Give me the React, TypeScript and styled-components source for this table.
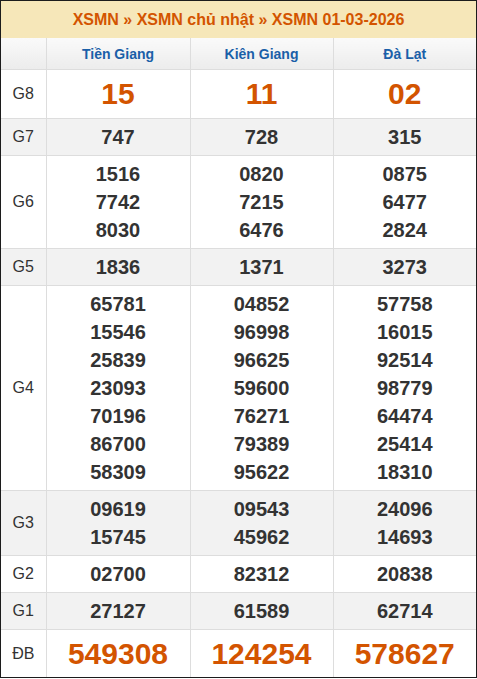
import React from 'react';
import styled, { createGlobalStyle } from 'styled-components';

const GlobalStyle = createGlobalStyle`
  html, body {
    margin: 0;
    padding: 0;
    background: #fff;
  }
  body {
    font-family: 'Liberation Sans', Arial, sans-serif;
  }
`;

type Prize = {
  label: string;
  results: string[][];
  big?: boolean;
  special?: boolean;
};

const provinces = ['Tiền Giang', 'Kiên Giang', 'Đà Lạt'];

const prizes: Prize[] = [
  { label: 'G8', results: [['15'], ['11'], ['02']], big: true },
  { label: 'G7', results: [['747'], ['728'], ['315']] },
  {
    label: 'G6',
    results: [
      ['1516', '7742', '8030'],
      ['0820', '7215', '6476'],
      ['0875', '6477', '2824'],
    ],
  },
  { label: 'G5', results: [['1836'], ['1371'], ['3273']] },
  {
    label: 'G4',
    results: [
      ['65781', '15546', '25839', '23093', '70196', '86700', '58309'],
      ['04852', '96998', '96625', '59600', '76271', '79389', '95622'],
      ['57758', '16015', '92514', '98779', '64474', '25414', '18310'],
    ],
  },
  {
    label: 'G3',
    results: [
      ['09619', '15745'],
      ['09543', '45962'],
      ['24096', '14693'],
    ],
  },
  { label: 'G2', results: [['02700'], ['82312'], ['20838']] },
  { label: 'G1', results: [['27127'], ['61589'], ['62714']] },
  { label: 'ĐB', results: [['549308'], ['124254'], ['578627']], special: true },
];

const Wrapper = styled.div`
  width: 477px;
  box-sizing: border-box;
  border: 1px solid #1c1c1c;
`;

const Title = styled.h1`
  margin: 0;
  height: 37px;
  display: flex;
  align-items: center;
  justify-content: center;
  background: #f6e7b9;
  color: #d35400;
  font-size: 16px;
  font-weight: bold;
`;

const Table = styled.table`
  width: 100%;
  border-collapse: collapse;
  table-layout: fixed;
`;

const HeadCell = styled.th`
  height: 31px;
  padding: 0;
  background: linear-gradient(#fafafa, #ececec);
  color: #1a5fa8;
  font-size: 14px;
  font-weight: bold;
  border-bottom: 1px solid #ddd;
  border-left: 1px solid #ddd;
  &:first-child {
    border-left: none;
  }
`;

const Row = styled.tr<{ $odd: boolean }>`
  background: ${({ $odd }) => ($odd ? '#f2f2f2' : '#fff')};
  &:last-child td {
    border-bottom: none;
  }
`;

const Label = styled.td`
  padding: 0;
  text-align: center;
  color: #333;
  font-size: 16px;
  border-bottom: 1px solid #ddd;
`;

const Cell = styled.td`
  padding: 4px 0;
  text-align: center;
  border-bottom: 1px solid #ddd;
  border-left: 1px solid #ddd;
`;

const Num = styled.div<{ $big?: boolean; $special?: boolean }>`
  font-weight: bold;
  font-size: ${({ $big, $special }) => ($big || $special ? '30px' : '20px')};
  line-height: ${({ $big, $special }) => ($big ? '40px' : $special ? '39px' : '28px')};
  color: ${({ $big, $special }) => ($big || $special ? '#d35400' : '#333')};
`;

const App: React.FC = () => (
  <>
    <GlobalStyle />
    <Wrapper>
      <Title>XSMN » XSMN chủ nhật » XSMN 01-03-2026</Title>
      <Table>
        <colgroup>
          <col style={{ width: 45 }} />
          <col style={{ width: 144 }} />
          <col style={{ width: 143 }} />
          <col style={{ width: 143 }} />
        </colgroup>
        <thead>
          <tr>
            <HeadCell />
            {provinces.map((p) => (
              <HeadCell key={p}>{p}</HeadCell>
            ))}
          </tr>
        </thead>
        <tbody>
          {prizes.map((prize, i) => (
            <Row key={prize.label} $odd={i % 2 === 1}>
              <Label>{prize.label}</Label>
              {prize.results.map((col, j) => (
                <Cell key={j}>
                  {col.map((n) => (
                    <Num key={n} $big={prize.big} $special={prize.special}>
                      {n}
                    </Num>
                  ))}
                </Cell>
              ))}
            </Row>
          ))}
        </tbody>
      </Table>
    </Wrapper>
  </>
);

export default App;
